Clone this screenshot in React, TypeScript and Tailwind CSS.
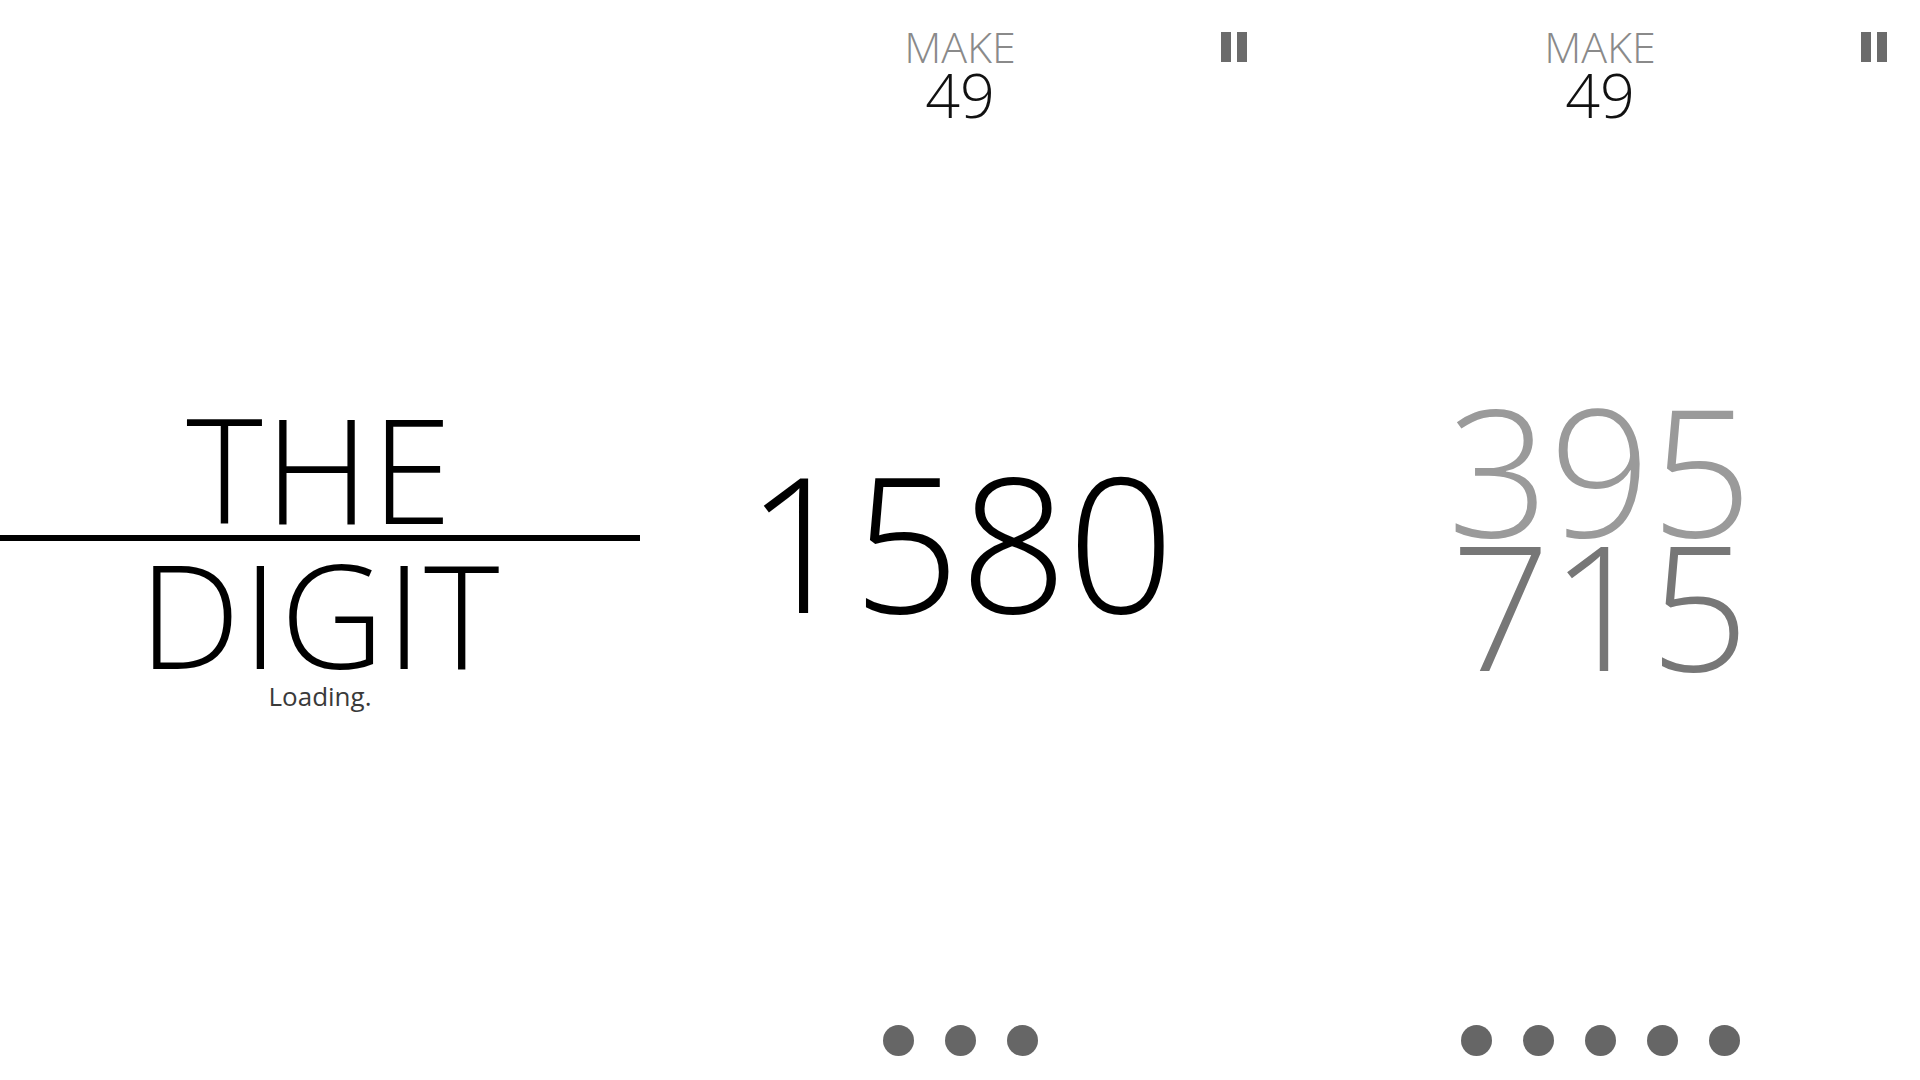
import React from 'react';

const FONT = { fontFamily: '"Open Sans", "Liberation Sans", sans-serif' };

// Pause icon (overlay button in the top-right corner of a game screen)
const PauseButton: React.FC = () => (
  <button className="absolute top-[32px] right-[33px] flex gap-[6px]" aria-label="Pause">
    <span className="block w-[10px] h-[30px] bg-[#6b6b6b]" />
    <span className="block w-[10px] h-[30px] bg-[#6b6b6b]" />
  </button>
);

const Target: React.FC<{ value: number }> = ({ value }) => (
  <div className="h-[130px] flex flex-col items-center pt-[29px]">
    <span className="text-[43px] leading-[36px] font-light text-[#8a8a8a]">MAKE</span>
    <span className="text-[61px] leading-[50px] font-light text-[#111] mt-[5px]">{value}</span>
  </div>
);

const Dots: React.FC<{ count: number }> = ({ count }) => (
  <div className="h-[130px] flex items-end justify-center gap-[31px] pb-[24px]">
    {Array.from({ length: count }).map((_, i) => (
      <span key={i} className="block w-[31px] h-[31px] rounded-full bg-[#666]" />
    ))}
  </div>
);

const TitleScreen: React.FC = () => (
  <section className="w-[640px] h-full flex flex-col items-center justify-center pt-[36px]">
    <h1 className="text-[146px] leading-[120px] font-light tracking-[0.012em] text-black">THE</h1>
    <div className="w-full h-[6px] bg-black mt-[7px]" />
    <h1 className="text-[144px] leading-[116px] font-light tracking-[0.012em] text-black mt-[14px]">DIGIT</h1>
    <p className="text-[26px] leading-none text-[#3a3a3a] mt-[12px]">Loading.</p>
  </section>
);

const GameScreen: React.FC<{ dots: number; children: React.ReactNode }> = ({ dots, children }) => (
  <section className="relative w-[640px] h-full flex flex-col">
    <Target value={49} />
    <PauseButton />
    <div className="flex-1 flex flex-col items-center justify-center">{children}</div>
    <Dots count={dots} />
  </section>
);

export default function App() {
  return (
    <div className="w-[1920px] h-[1080px] bg-white flex overflow-hidden" style={FONT}>
      <TitleScreen />
      <GameScreen dots={3}>
        <span className="text-[188px] leading-none font-light text-black">1580</span>
      </GameScreen>
      <GameScreen dots={5}>
        <div className="flex flex-col items-center pb-[8px]">
          <span className="text-[178px] leading-[136px] font-light text-[#9a9a9a]">395</span>
          <span className="text-[174px] leading-[136px] font-light text-[#777]">715</span>
        </div>
      </GameScreen>
    </div>
  );
}
